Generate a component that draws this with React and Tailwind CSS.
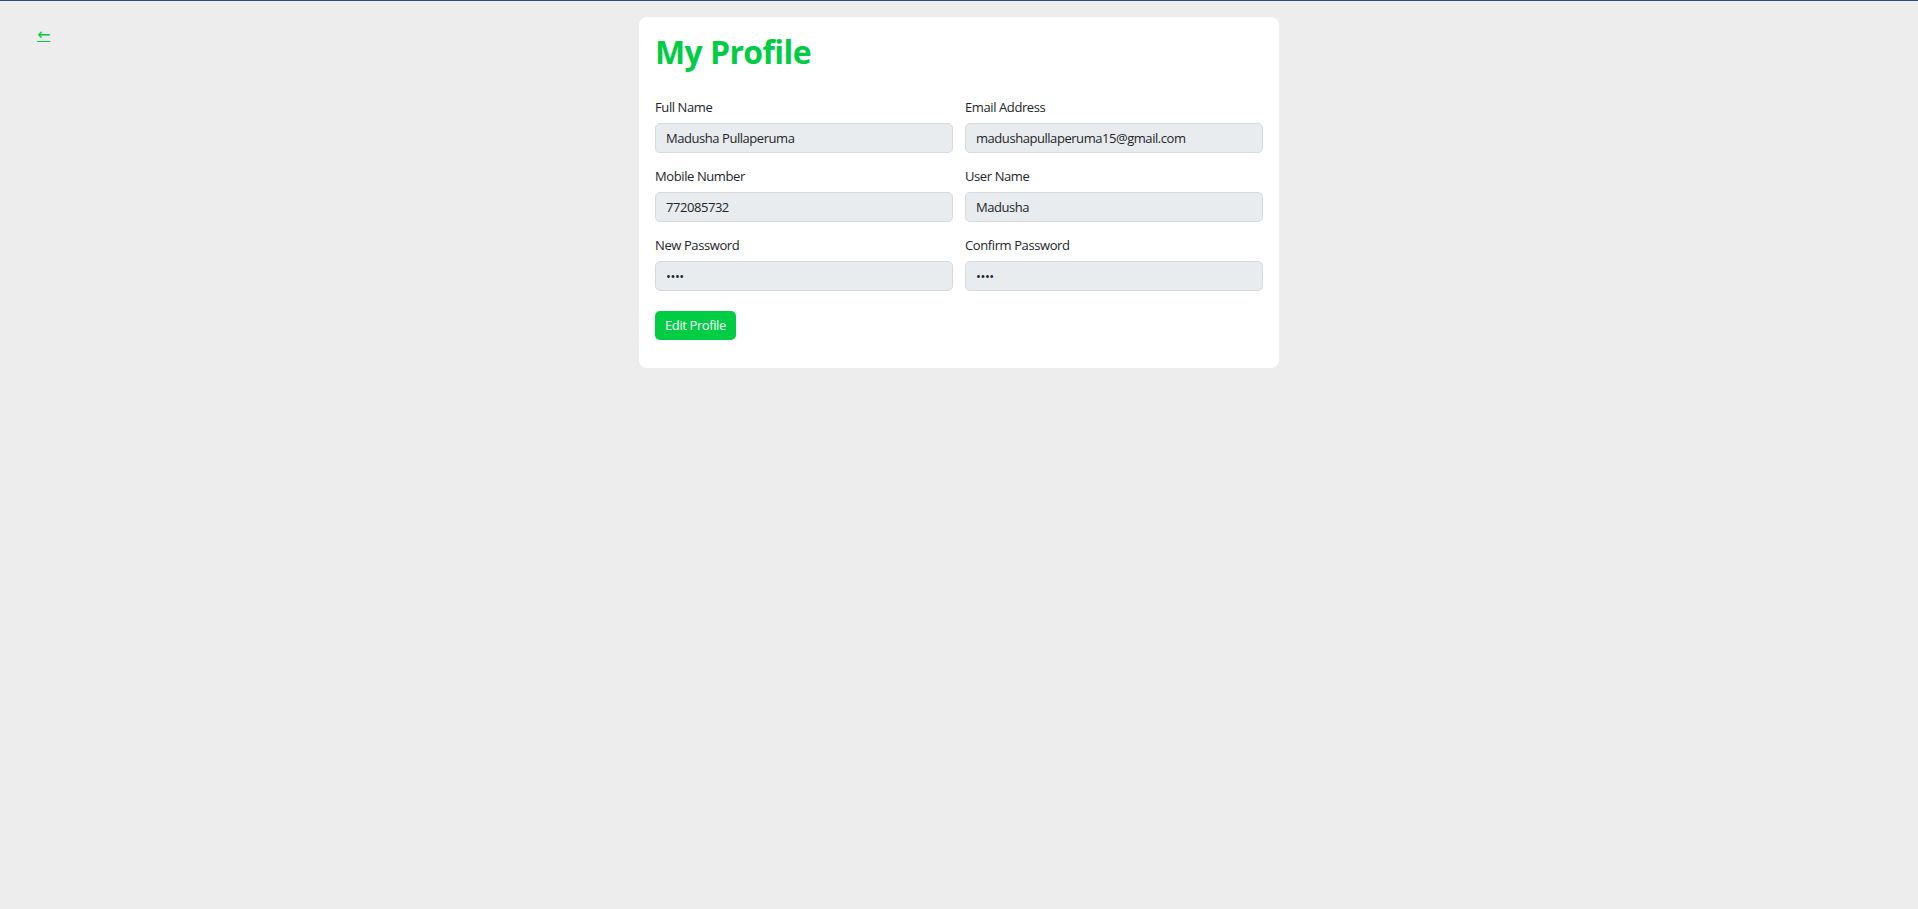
import React from "react";

const fields = [
  ["Full Name", "Madusha Pullaperuma", "text"],
  ["Email Address", "madushapullaperuma15@gmail.com", "text"],
  ["Mobile Number", "772085732", "text"],
  ["User Name", "Madusha", "text"],
  ["New Password", "1234", "password"],
  ["Confirm Password", "1234", "password"],
];

export default function App() {
  return (
    <div className="min-h-screen bg-[#ededed] text-[#212529]" style={{ fontFamily: '"Open Sans", "Noto Sans", sans-serif' }}>
      <div className="h-px bg-[#2b4c70]" />
      <div className="grid grid-cols-[1fr_640px_1fr]">
        <div className="pl-[37px] pt-[21px]">
          <a href="#" className="text-[16px] leading-[24px] text-[#00cc44] underline" style={{ fontFamily: '"DejaVu Sans", sans-serif' }}>
            ←
          </a>
        </div>
        <div className="mt-4 rounded-lg bg-white px-4 pt-4 pb-[28px]">
          <h1 className="mb-[26px] text-[32px] font-bold leading-[38px] tracking-[-0.6px] text-[#00cc44]">My Profile</h1>
          <div className="grid grid-cols-2 gap-x-3 gap-y-[13px]">
            {fields.map(([label, value, type]) => (
              <div key={label} className="flex flex-col">
                <label className="mb-[6px] text-[13px] leading-[20px] tracking-[-0.4px]">{label}</label>
                <input
                  type={type}
                  value={value}
                  readOnly
                  disabled
                  className="h-[30px] rounded-[5px] border border-[#d6dadf] bg-[#e9ecef] px-[10px] text-[13px] tracking-[-0.45px] text-[#212529] outline-none"
                />
              </div>
            ))}
          </div>
          <button className="mt-[20px] h-[29px] rounded-[5px] bg-[#00cc44] px-[10px] text-[13px] tracking-[-0.4px] text-white">
            Edit Profile
          </button>
        </div>
        <div />
      </div>
    </div>
  );
}
